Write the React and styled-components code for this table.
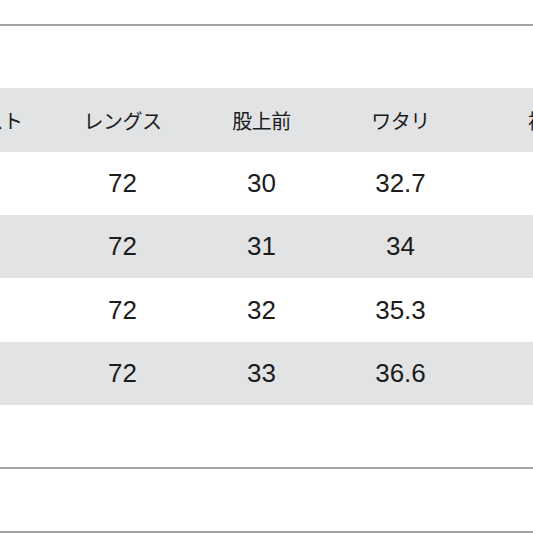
import React from "react";
import styled, { createGlobalStyle } from "styled-components";

const Global = createGlobalStyle`
  html, body { margin: 0; padding: 0; background: #ffffff; }
  body { width: 533px; height: 533px; overflow: hidden; }
`;

const Page = styled.div`
  width: 533px;
  height: 533px;
  overflow: hidden;
  display: flex;
  flex-direction: column;
  background: #fdfdfd;
`;

const Rule = styled.div`
  height: 2px;
  background: #a2a2a2;
  flex: none;
`;

const Spacer = styled.div`
  height: ${(p) => p.$h}px;
  flex: none;
  background: #ffffff;
`;

const Table = styled.div`
  display: grid;
  grid-template-columns: 139px 139px 139px 139px 155px;
  margin-left: -86px;
  width: 711px;
`;

const Row = styled.div`
  display: contents;
`;

const Cell = styled.div`
  height: ${(p) => p.$h}px;
  display: flex;
  align-items: center;
  justify-content: center;
  background: ${(p) => (p.$shade ? "#e2e3e5" : "#ffffff")};
  color: #1c1c1c;
  white-space: nowrap;
  font-family: ${(p) =>
    p.$head
      ? '"Noto Sans CJK JP", "Noto Sans", sans-serif'
      : '"Liberation Sans", Arial, sans-serif'};
  font-size: ${(p) => (p.$head ? 20 : 26)}px;
  font-weight: 400;
  letter-spacing: ${(p) => (p.$head ? "-0.5px" : "0")};
`;

const headers = ["ウエスト", "レングス", "股上前", "ワタリ", "裾幅"];
const rows = [
  ["", "72", "30", "32.7", ""],
  ["", "72", "31", "34", ""],
  ["", "72", "32", "35.3", ""],
  ["", "72", "33", "36.6", ""],
];
const heights = [63, 63, 64, 63];

export default function App() {
  return (
    <>
      <Global />
      <Page>
        <Spacer $h={24} />
        <Rule />
        <Spacer $h={62} />
        <Table>
          <Row>
            {headers.map((h, i) => (
              <Cell key={i} $head $shade $h={64}>
                {h}
              </Cell>
            ))}
          </Row>
          {rows.map((r, ri) => (
            <Row key={ri}>
              {r.map((v, ci) => (
                <Cell key={ci} $shade={ri % 2 === 1} $h={heights[ri]}>
                  {v}
                </Cell>
              ))}
            </Row>
          ))}
        </Table>
        <Spacer $h={62} />
        <Rule />
        <Spacer $h={62} />
        <Rule />
      </Page>
    </>
  );
}
